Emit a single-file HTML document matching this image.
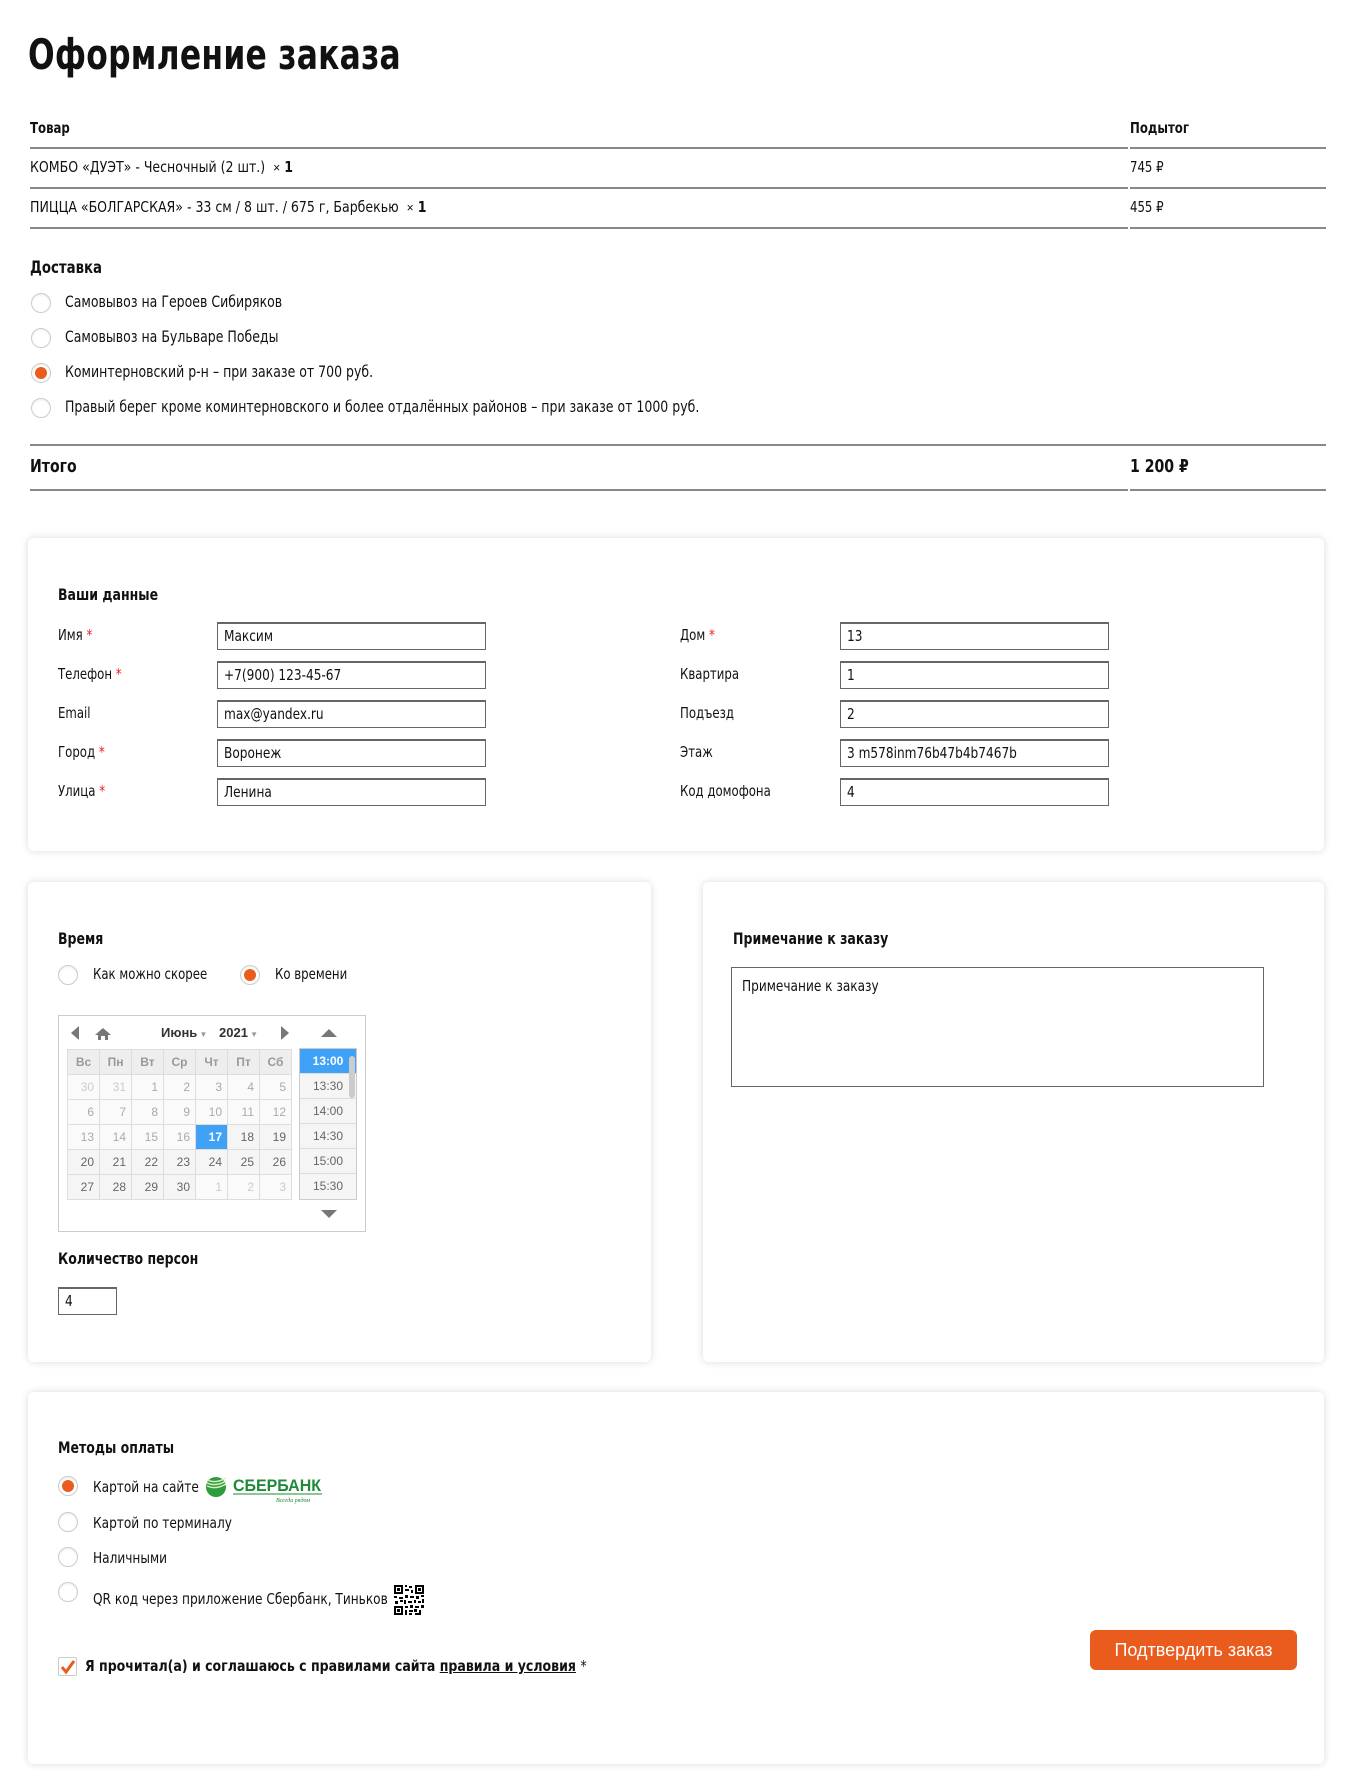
<!DOCTYPE html>
<html><head><meta charset="utf-8"><style>
*{box-sizing:border-box;margin:0;padding:0}
body{width:1351px;height:1787px;background:#fff;position:relative;font-family:"Liberation Sans Narrow","DejaVu Sans Condensed","Liberation Sans",sans-serif;color:#111;font-size:15px;overflow:hidden}
.a{position:absolute;white-space:nowrap;transform:scaleX(.87);transform-origin:0 0}
.c{position:absolute;white-space:nowrap}
.line{position:absolute;height:2px;background:#888}
.b{font-weight:bold}
.radio{position:absolute;width:20px;height:20px;border-radius:50%;border:1px solid #ccc;background:#fff;box-shadow:inset 0 1px 2px rgba(0,0,0,.08)}
.radio.on::after{content:"";position:absolute;left:3px;top:3px;width:12px;height:12px;border-radius:50%;background:#ea5b1e}
.panel{position:absolute;background:#fff;border-radius:6px;box-shadow:0 0 8px rgba(0,0,0,.15)}
.inp{position:absolute;height:28px;border:1px solid #666;border-top-width:2px;padding-left:6px;line-height:24px;font-size:15px;white-space:nowrap}
.inp span{display:inline-block;transform:scaleX(.9);transform-origin:0 0}
.req{color:#e22}
.cal{position:absolute;left:58px;top:1015px;width:308px;height:217px;border:1px solid #ccc;font-family:"Liberation Sans",sans-serif}
table.g{position:absolute;left:8px;top:33px;border-collapse:collapse}
table.g td{width:32px;height:25px;border:1px solid #ddd;background:#f5f5f5;text-align:right;padding-right:5px;font-size:12px;color:#666}
table.g tr.h td{background:#eee;color:#999;font-weight:bold;text-align:center;padding:0}
table.g td.m{color:#ccc;background:#fafafa}
table.g td.p{color:#aaa;background:#fafafa}
table.g td.s{background:#3fa2f7;color:#fff;font-weight:bold}
.tl{position:absolute;left:240px;top:32px;width:58px;border:1px solid #ccc}
.tl div{height:25px;border-bottom:1px solid #ddd;background:#f5f5f5;text-align:center;line-height:24px;font-size:12px;color:#666}
.tl div.s{background:#3fa2f7;color:#fff;font-weight:bold}
</style></head><body>
<div class="a b" style="left:28px;top:30px;font-size:42px;letter-spacing:.3px;transform:scaleX(.83)">Оформление заказа</div>
<div class="a b" style="left:30px;top:119px;font-size:15px">Товар</div>
<div class="a b" style="left:1130px;top:119px;font-size:15px">Подытог</div>
<div class="line" style="left:30px;width:1098px;top:147px"></div><div class="line" style="left:1130px;width:196px;top:147px"></div>
<div class="a" style="left:30px;top:158px;transform:scaleX(.93)">КОМБО «ДУЭТ» - Чесночный (2 шт.) &nbsp;<span style="font-family:'Liberation Sans',sans-serif;font-size:13px">×</span> <b>1</b></div>
<div class="a" style="left:1130px;top:158px">745 ₽</div>
<div class="line" style="left:30px;width:1098px;top:187px"></div><div class="line" style="left:1130px;width:196px;top:187px"></div>
<div class="a" style="left:30px;top:198px;transform:scaleX(.93)">ПИЦЦА «БОЛГАРСКАЯ» - 33 см / 8 шт. / 675 г, Барбекью &nbsp;<span style="font-family:'Liberation Sans',sans-serif;font-size:13px">×</span> <b>1</b></div>
<div class="a" style="left:1130px;top:198px">455 ₽</div>
<div class="line" style="left:30px;width:1098px;top:227px"></div><div class="line" style="left:1130px;width:196px;top:227px"></div>

<div class="a b" style="left:30px;top:258px;font-size:17px">Доставка</div>
<div class="radio" style="left:31px;top:293px"></div><div class="a" style="left:65px;top:292px;font-size:16px">Самовывоз на Героев Сибиряков</div>
<div class="radio" style="left:31px;top:328px"></div><div class="a" style="left:65px;top:327px;font-size:16px">Самовывоз на Бульваре Победы</div>
<div class="radio on" style="left:31px;top:363px"></div><div class="a" style="left:65px;top:362px;font-size:16px">Коминтерновский р-н – при заказе от 700 руб.</div>
<div class="radio" style="left:31px;top:398px"></div><div class="a" style="left:65px;top:397px;font-size:16px">Правый берег кроме коминтерновского и более отдалённых районов – при заказе от 1000 руб.</div>
<div class="line" style="left:30px;width:1296px;top:444px"></div>
<div class="a b" style="left:30px;top:456px;font-size:18px">Итого</div>
<div class="a b" style="left:1130px;top:456px;font-size:18px">1 200 ₽</div>
<div class="line" style="left:30px;width:1098px;top:489px"></div><div class="line" style="left:1130px;width:196px;top:489px"></div>

<div class="panel" style="left:28px;top:538px;width:1296px;height:313px"></div>
<div class="a b" style="left:58px;top:585px;font-size:16px">Ваши данные</div>
<div class="a" style="left:58px;top:626px">Имя <span class="req">*</span></div><div class="inp" style="left:217px;top:622px;width:269px"><span>Максим</span></div>
<div class="a" style="left:58px;top:665px">Телефон <span class="req">*</span></div><div class="inp" style="left:217px;top:661px;width:269px"><span>+7(900) 123-45-67</span></div>
<div class="a" style="left:58px;top:704px">Email</div><div class="inp" style="left:217px;top:700px;width:269px"><span>max@yandex.ru</span></div>
<div class="a" style="left:58px;top:743px">Город <span class="req">*</span></div><div class="inp" style="left:217px;top:739px;width:269px"><span>Воронеж</span></div>
<div class="a" style="left:58px;top:782px">Улица <span class="req">*</span></div><div class="inp" style="left:217px;top:778px;width:269px"><span>Ленина</span></div>
<div class="a" style="left:680px;top:626px">Дом <span class="req">*</span></div><div class="inp" style="left:840px;top:622px;width:269px"><span>13</span></div>
<div class="a" style="left:680px;top:665px">Квартира</div><div class="inp" style="left:840px;top:661px;width:269px"><span>1</span></div>
<div class="a" style="left:680px;top:704px">Подъезд</div><div class="inp" style="left:840px;top:700px;width:269px"><span>2</span></div>
<div class="a" style="left:680px;top:743px">Этаж</div><div class="inp" style="left:840px;top:739px;width:269px"><span>3 m578inm76b47b4b7467b</span></div>
<div class="a" style="left:680px;top:782px">Код домофона</div><div class="inp" style="left:840px;top:778px;width:269px"><span>4</span></div>

<div class="panel" style="left:28px;top:882px;width:623px;height:480px"></div>
<div class="panel" style="left:703px;top:882px;width:621px;height:480px"></div>
<div class="a b" style="left:58px;top:929px;font-size:16px">Время</div>
<div class="radio" style="left:58px;top:965px"></div><div class="a" style="left:93px;top:965px">Как можно скорее</div>
<div class="radio on" style="left:240px;top:965px"></div><div class="a" style="left:275px;top:965px">Ко времени</div>

<div class="cal">
<svg class="c" style="left:12px;top:10px" width="10" height="14"><path d="M8 0 L0 7 L8 14Z" fill="#777"/></svg>
<svg class="c" style="left:36px;top:12px" width="16" height="12"><path d="M8 0 L16 7 H13 V12 H10 V8 H6 V12 H3 V7 H0Z" fill="#777"/></svg>
<div class="c b" style="left:102px;top:9px;font-size:13px;color:#333">Июнь<span style="font-size:8px;color:#999"> ▼</span></div>
<div class="c b" style="left:160px;top:9px;font-size:13px;color:#333">2021<span style="font-size:8px;color:#999"> ▼</span></div>
<svg class="c" style="left:220px;top:10px" width="10" height="14"><path d="M2 0 L10 7 L2 14Z" fill="#777"/></svg>
<svg class="c" style="left:262px;top:13px" width="16" height="8"><path d="M0 8 L8 0 L16 8Z" fill="#777"/></svg>
<table class="g">
<tr class="h"><td>Вс</td><td>Пн</td><td>Вт</td><td>Ср</td><td>Чт</td><td>Пт</td><td>Сб</td></tr>
<tr><td class="m">30</td><td class="m">31</td><td class="p">1</td><td class="p">2</td><td class="p">3</td><td class="p">4</td><td class="p">5</td></tr>
<tr><td class="p">6</td><td class="p">7</td><td class="p">8</td><td class="p">9</td><td class="p">10</td><td class="p">11</td><td class="p">12</td></tr>
<tr><td class="p">13</td><td class="p">14</td><td class="p">15</td><td class="p">16</td><td class="s">17</td><td>18</td><td>19</td></tr>
<tr><td>20</td><td>21</td><td>22</td><td>23</td><td>24</td><td>25</td><td>26</td></tr>
<tr><td>27</td><td>28</td><td>29</td><td>30</td><td class="m">1</td><td class="m">2</td><td class="m">3</td></tr>
</table>
<div class="tl"><div class="s">13:00</div><div>13:30</div><div>14:00</div><div>14:30</div><div>15:00</div><div style="border-bottom:0">15:30</div></div>
<div class="c" style="left:290px;top:40px;width:6px;height:42px;background:#ccc;border-radius:3px"></div>
<svg class="c" style="left:262px;top:194px" width="16" height="8"><path d="M0 0 L8 8 L16 0Z" fill="#777"/></svg>
</div>

<div class="a b" style="left:58px;top:1249px;font-size:16px">Количество персон</div>
<div class="inp" style="left:58px;top:1287px;width:59px"><span>4</span></div>

<div class="a b" style="left:733px;top:929px;font-size:16px">Примечание к заказу</div>
<div class="inp" style="left:731px;top:967px;width:533px;height:120px;border-top-width:1px;line-height:20px;padding:8px 10px"><span>Примечание к заказу</span></div>

<div class="panel" style="left:28px;top:1392px;width:1296px;height:372px"></div>
<div class="a b" style="left:58px;top:1438px;font-size:16px">Методы оплаты</div>
<div class="radio on" style="left:58px;top:1476px"></div><div class="a" style="left:93px;top:1478px;transform:scaleX(.9)">Картой на сайте</div>
<svg class="c" style="left:204px;top:1474px" width="120" height="30">
<circle cx="12" cy="13" r="10" fill="#2e9b3e"/><path d="M3 6 Q12 10 22 4 M3 9 Q12 13 22 7 M3 12 Q12 16 22 10" stroke="#d8f0c0" stroke-width="1.5" fill="none"/>
<text x="29" y="17" font-family="Liberation Sans Narrow,Liberation Sans,sans-serif" font-size="17" font-weight="bold" fill="#1e8a3a" textLength="88" lengthAdjust="spacingAndGlyphs">СБЕРБАНК</text>
<line x1="29" y1="20" x2="118" y2="20" stroke="#1e8a3a"/>
<text x="72" y="28" font-family="Liberation Serif,serif" font-size="6" font-style="italic" fill="#1e8a3a">Всегда рядом</text></svg>
<div class="radio" style="left:58px;top:1512px"></div><div class="a" style="left:93px;top:1514px;transform:scaleX(.9)">Картой по терминалу</div>
<div class="radio" style="left:58px;top:1547px"></div><div class="a" style="left:93px;top:1549px;transform:scaleX(.9)">Наличными</div>
<div class="radio" style="left:58px;top:1582px"></div><div class="a" style="left:93px;top:1590px;transform:scaleX(.9)">QR код через приложение Сбербанк, Тиньков</div>
<svg class="c" style="left:394px;top:1585px" width="30" height="30" shape-rendering="crispEdges">
<rect x="0" y="0" width="9" height="9" fill="#000"/><rect x="2" y="2" width="5" height="5" fill="#fff"/><rect x="3" y="3" width="3" height="3" fill="#000"/>
<rect x="21" y="0" width="9" height="9" fill="#000"/><rect x="23" y="2" width="5" height="5" fill="#fff"/><rect x="24" y="3" width="3" height="3" fill="#000"/>
<rect x="0" y="21" width="9" height="9" fill="#000"/><rect x="2" y="23" width="5" height="5" fill="#fff"/><rect x="3" y="24" width="3" height="3" fill="#000"/>
<path d="M11 0h2v2h-2zM15 1h3v2h-3zM11 4h4v2h-4zM17 5h2v3h-2zM0 11h3v2h-3zM5 12h4v2h-4zM11 10h3v3h-3zM16 11h4v2h-4zM22 11h3v3h-3zM27 10h3v2h-3zM1 16h3v3h-3zM6 15h3v2h-3zM10 15h2v4h-2zM14 16h4v2h-4zM20 15h2v3h-2zM24 16h3v2h-3zM28 14h2v4h-2zM11 21h3v2h-3zM16 20h3v3h-3zM21 21h4v2h-4zM27 20h3v3h-3zM11 25h2v5h-2zM15 25h4v2h-4zM20 24h3v3h-3zM25 25h2v3h-2zM15 28h3v2h-3zM21 28h6v2h-6z" fill="#000"/></svg>

<div class="c" style="left:58px;top:1657px;width:19px;height:19px;border:1px solid #ccc;border-radius:2px"></div>
<svg class="c" style="left:60px;top:1659px" width="16" height="16"><path d="M2 8 L6 13 L14 2" stroke="#ea5b1e" stroke-width="3" fill="none"/></svg>
<div class="a b" style="left:85px;top:1657px;transform:scaleX(.93)">Я прочитал(а) и соглашаюсь с правилами сайта <u>правила и условия</u> <span style="font-weight:normal">*</span></div>
<div class="c" style="left:1090px;top:1630px;width:207px;height:40px;background:#ea5b1e;border-radius:6px;color:#fff;font-family:'Liberation Sans',sans-serif;font-size:18px;text-align:center;line-height:40px">Подтвердить заказ</div>
</body></html>
